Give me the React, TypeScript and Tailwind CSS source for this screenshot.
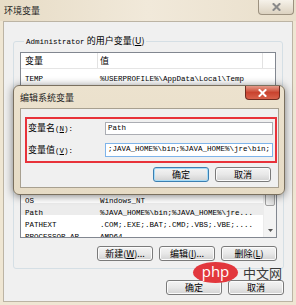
import React from 'react';

const cjk = "font-['Noto_Sans_CJK_SC',sans-serif]";
const mono = "font-['Liberation_Mono','Noto_Sans_CJK_SC',monospace]";

const M = ({ children }: { children: React.ReactNode }) => (
  <span className={`${mono} text-[7.5px]`}>{children}</span>
);

const Btn = ({ children, primary = false }: { children: React.ReactNode; primary?: boolean }) => (
  <div
    className={`w-[56px] h-[15px] rounded-[3px] border flex items-center justify-center text-[9px] leading-none text-black bg-linear-to-b from-[#f4f4f4] via-[#e8e8e8] to-[#d2d2d2] ${cjk} ${
      primary ? 'border-[#3c7fb1] shadow-[inset_0_0_0_1px_#a6dcf8]' : 'border-[#7a7a7a] shadow-[inset_0_0_0_1px_#fbfbfb]'
    }`}
  >
    {children}
  </div>
);

const Row = ({ name, value, active = false, hidden = false }: { name: string; value: string; active?: boolean; hidden?: boolean }) => (
  <div className={`h-[12px] flex items-center leading-none ${active ? 'bg-[#ececec]' : 'bg-white'}`}>
    <div className={`w-[77px] pl-[4px] truncate ${hidden ? 'invisible' : ''}`}>
      <M>{name}</M>
    </div>
    <div className={`flex-1 pl-[2px] truncate ${hidden ? 'invisible' : ''}`}>
      <M>{value}</M>
    </div>
  </div>
);

const Header = ({ hidden = false }: { hidden?: boolean }) => (
  <div className={`h-[16px] flex items-stretch bg-white border-b border-[#e5e5e5] text-[9px] ${cjk}`}>
    <div className="w-[77px] pl-[4px] flex items-center border-r border-[#e2e2e2]">
      <span className={hidden ? 'invisible' : ''}>变量</span>
    </div>
    <div className="w-[165px] pl-[2px] flex items-center border-r border-[#e2e2e2]">
      <span className={hidden ? 'invisible' : ''}>值</span>
    </div>
    <div className="flex-1" />
  </div>
);

const CloseGlyph = ({ color }: { color: string }) => (
  <svg width="9" height="8" viewBox="0 0 9 8">
    <path d="M1.5 1 L7.5 7 M7.5 1 L1.5 7" stroke={color} strokeWidth="2" strokeLinecap="square" />
  </svg>
);

export default function App() {
  return (
    <div className="relative w-[296px] h-[305px] overflow-hidden bg-[#efe6d3] text-black">
      {/* outer window title */}
      <div className="h-[21px] flex items-start justify-between bg-linear-to-r from-[#e7dcc6] via-[#f1e9da] to-[#e9dfcb]">
        <div className={`pl-[4px] leading-[21px] text-[9px] text-[#1e1e1e] ${cjk}`}>环境变量</div>
        <div className="mr-[2px] w-[36px] h-[15px] rounded-b-[4px] border border-t-0 border-[#9c917f] bg-linear-to-b from-[#f6f2ea] to-[#dcd2c0] flex items-center justify-center">
          <CloseGlyph color="#8a8a8a" />
        </div>
      </div>

      {/* outer window content */}
      <div className="mx-[3px] h-[281px] bg-[#f0f0f0] border border-[#bcb4a4] flex flex-col">
        <fieldset className="mt-[13px] mx-[9px] px-[6px] pt-[4px] pb-[7px] border border-[#d5dfe5] rounded-[3px]">
          <legend className="ml-[4px] px-[2px] leading-[12px] text-[9px]">
            <M>Administrator</M> <span className={cjk}>的用户变量(<u>U</u>)</span>
          </legend>
          <div className="h-[64px] border border-[#828790] bg-white overflow-hidden">
            <Header />
            <Row name="TEMP" value={'%USERPROFILE%\\AppData\\Local\\Temp'} />
            <Row name="TMP" value={'%USERPROFILE%\\AppData\\Local\\Temp'} />
          </div>
          <div className="mt-[5px] flex justify-end gap-[6px] invisible">
            <Btn>新建(<u>N</u>)...</Btn>
            <Btn>编辑(<u>E</u>)...</Btn>
            <Btn>删除(<u>D</u>)</Btn>
          </div>
        </fieldset>

        <fieldset className="mt-[4px] mx-[9px] px-[6px] pt-[2px] pb-[7px] border border-[#d5dfe5] rounded-[3px]">
          <legend className={`ml-[4px] px-[2px] leading-[12px] text-[9px] ${cjk}`}>
            <span className="invisible">系统变量(<u>S</u>)</span>
          </legend>
          <div className="h-[76px] border border-[#828790] bg-white overflow-hidden flex">
            <div className="flex-1 min-w-0">
              <Header hidden />
              <Row name="NUMBER_OF_PR..." value="4" hidden />
              <Row name="OS" value="Windows_NT" />
              <Row name="Path" value={'%JAVA_HOME%\\bin;%JAVA_HOME%\\jre...'} active />
              <Row name="PATHEXT" value=".COM;.EXE;.BAT;.CMD;.VBS;.VBE;...." />
              <Row name="PROCESSOR_AR..." value="AMD64" />
            </div>
            <div className="w-[13px] flex flex-col bg-[#f3f3f3] border-l border-[#ececec]">
              <div className="h-[13px]" />
              <div className="h-[30px] mx-[1px] rounded-[2px] border border-[#a0a0a0] bg-linear-to-r from-[#f2f2f2] to-[#dcdcdc]" />
              <div className="flex-1" />
              <div className="h-[13px] flex items-center justify-center">
                <svg width="5" height="3" viewBox="0 0 5 3">
                  <path d="M0 0 H5 L2.5 3 Z" fill="#555" />
                </svg>
              </div>
            </div>
          </div>
          <div className="mt-[8px] flex justify-end gap-[6px]">
            <Btn>新建(<u>W</u>)...</Btn>
            <Btn>编辑(<u>I</u>)...</Btn>
            <Btn>删除(<u>L</u>)</Btn>
          </div>
        </fieldset>

        <div className="mt-[11px] pr-[8px] flex justify-end gap-[6px]">
          <Btn>确定</Btn>
          <Btn>取消</Btn>
        </div>
      </div>

      {/* edit dialog on top */}
      <div className="absolute left-[13px] top-[85px] w-[272px] h-[110px] rounded-[6px] border border-[#7a705f] bg-linear-to-b from-[#ece2ce] to-[#e6dbc5] shadow-[0_1px_8px_rgba(0,0,0,0.5)] flex flex-col">
        <div className="h-[22px] flex items-start justify-between">
          <div className={`pl-[6px] leading-[24px] text-[9px] text-[#1e1e1e] ${cjk}`}>编辑系统变量</div>
          <div className="mr-[4px] w-[35px] h-[14px] rounded-b-[4px] border border-t-0 border-[#6e2b20] bg-linear-to-b from-[#e49a89] via-[#c9432f] to-[#d8614a] flex items-center justify-center">
            <CloseGlyph color="#ffffff" />
          </div>
        </div>
        <div className="ml-[6px] mr-[5px] h-[80px] border border-[#a8a090] bg-[#f0f0f0] pl-[4px] pr-[1px] pt-[8px]">
          <div className="h-[46px] border-2 border-[#e8323a] pl-[1px] pr-[2px] pt-[3px] flex flex-col gap-[8px]">
            <div className="h-[13px] flex items-center">
              <div className={`w-[77px] text-[9px] leading-none ${cjk}`}>
                变量名<M>(<u>N</u>):</M>
              </div>
              <div className="flex-1 h-[13px] border border-[#abadb3] bg-white pl-[2px] flex items-center leading-none">
                <M>Path</M>
              </div>
            </div>
            <div className="h-[14px] flex items-center">
              <div className={`w-[77px] text-[9px] leading-none ${cjk}`}>
                变量值<M>(<u>V</u>):</M>
              </div>
              <div className="flex-1 h-[14px] border border-[#7eb4ea] bg-white pl-[2px] flex items-center overflow-hidden whitespace-nowrap leading-none">
                <M>{';JAVA_HOME%\\bin;%JAVA_HOME%\\jre\\bin;'}</M>
              </div>
            </div>
          </div>
          <div className="mt-[4px] pr-[6px] flex justify-end gap-[6px]">
            <Btn primary>确定</Btn>
            <Btn>取消</Btn>
          </div>
        </div>
      </div>

      {/* watermark */}
      <div className="absolute left-[193px] top-[262px] flex items-center gap-[5px]">
        <div className="w-[45px] h-[21px] rounded-[50%] bg-[#e2373d] flex items-center justify-center">
          <span className="text-white text-[15px] leading-none font-['Open_Sans',sans-serif] -mt-[3px]">php</span>
        </div>
        <span className={`text-[13px] leading-none text-[#3a3a3a] ${cjk}`}>中文网</span>
      </div>
    </div>
  );
}
